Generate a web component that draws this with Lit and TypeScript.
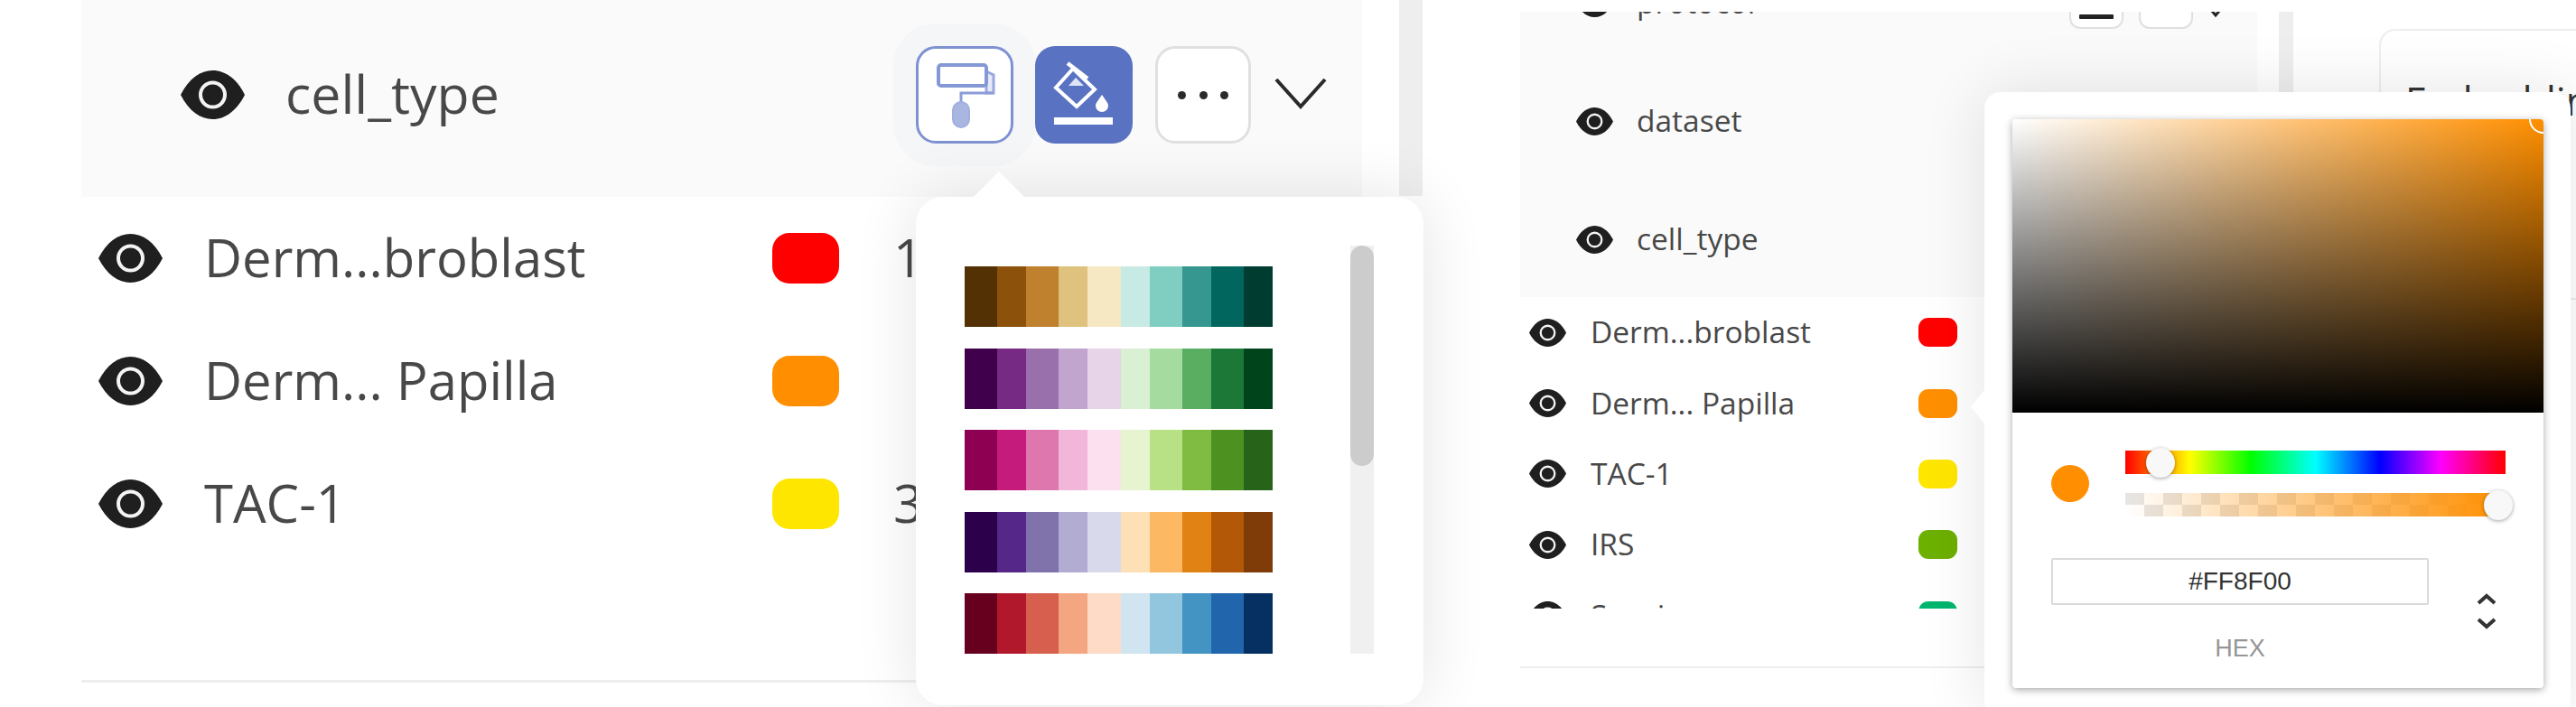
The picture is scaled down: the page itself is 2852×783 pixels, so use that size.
import { LitElement, html, css, svg } from "lit";
import { customElement } from "lit/decorators.js";

const PALETTES = [
  ["#543005", "#8c510a", "#bf812d", "#dfc27d", "#f6e8c3", "#c7eae5", "#80cdc1", "#35978f", "#01665e", "#003c30"],
  ["#40004b", "#762a83", "#9970ab", "#c2a5cf", "#e7d4e8", "#d9f0d3", "#a6dba0", "#5aae61", "#1b7837", "#00441b"],
  ["#8e0152", "#c51b7d", "#de77ae", "#f1b6da", "#fde0ef", "#e6f5d0", "#b8e186", "#7fbc41", "#4d9221", "#276419"],
  ["#2d004b", "#542788", "#8073ac", "#b2abd2", "#d8daeb", "#fee0b6", "#fdb863", "#e08214", "#b35806", "#7f3b08"],
  ["#67001f", "#b2182b", "#d6604d", "#f4a582", "#fddbc7", "#d1e5f0", "#92c5de", "#4393c3", "#2166ac", "#053061"],
];

const LEFT_ROWS = [
  { name: "Derm...broblast", color: "#ff0000", count: "1" },
  { name: "Derm... Papilla", color: "#ff8f00", count: "" },
  { name: "TAC-1", color: "#ffe600", count: "3" },
];
const RIGHT_ROWS = [
  { name: "Derm...broblast", color: "#ff0000" },
  { name: "Derm... Papilla", color: "#ff8f00" },
  { name: "TAC-1", color: "#ffe600" },
  { name: "IRS", color: "#6cb000" },
  { name: "Sensi", color: "#00b56e" },
];

const eye = svg`<svg class="eye" viewBox="0 0 71 54" preserveAspectRatio="none">
  <path fill="#1f1f1f" d="M0 27C9 9 22 0 35.5 0S62 9 71 27C62 45 49 54 35.5 54S9 45 0 27Z"/>
  <circle cx="35.5" cy="27" r="13.5" fill="#1f1f1f" stroke="#f4f4f4" stroke-width="4"/>
</svg>`;

const roller = svg`<svg class="ico" viewBox="0 0 108 108">
  <path fill="#e6eaf7" stroke="#98a8de" stroke-width="3" d="M78 28l8 4v20H78z"/>
  <rect x="25" y="21" width="53" height="23" rx="3" fill="#fff" stroke="#8498d6" stroke-width="4"/>
  <path fill="none" stroke="#8c9dd8" stroke-width="3" d="M86 52H50v11"/>
  <rect x="41" y="62" width="18" height="28" rx="9" fill="#a9b6e0" stroke="#a0afe0" stroke-width="2"/>
</svg>`;

const bucket = svg`<svg class="ico" viewBox="0 0 108 108">
  <path fill="none" stroke="#fff" stroke-width="4" d="M23 46 42 25 66 48 46 67Z"/>
  <path fill="none" stroke="#fff" stroke-width="4.5" d="M36 19 58 36"/>
  <path fill="#dfe4f4" d="M37 44 45 35 54 44Z"/>
  <path fill="#fff" d="M74 54C78 60 81 63 81 66A7 7 0 0 1 67 66C67 63 70 60 74 54Z"/>
  <rect x="21" y="79" width="65" height="8" fill="#fff"/>
</svg>`;

const chevron = svg`<svg class="chev" viewBox="0 0 58 38">
  <path fill="none" stroke="#2a2a2a" stroke-width="4" d="M2 3 29 33 56 3"/>
</svg>`;

const toggle = svg`<svg class="toggle" viewBox="0 0 22 40">
  <path fill="none" stroke="#333" stroke-width="4" d="M2 11 11 3 20 11M2 29 11 37 20 29"/>
</svg>`;

@customElement("app-root")
export class AppRoot extends LitElement {
  static styles = css`
    :host {
      display: block;
      width: 2852px;
      height: 783px;
      overflow: hidden;
      background: #fff;
      position: relative;
      font-family: "Open Sans", "Liberation Sans", sans-serif;
      color: #484848;
    }
    .stage { display: flex; width: 2852px; height: 783px; overflow: hidden; }
    .eye { display: block; flex: none; }

    /* left shot */
    .left { flex: none; width: 1600px; height: 783px; position: relative; display: flex; padding-left: 90px; box-sizing: border-box; }
    .l-list { width: 1418px; flex: none; }
    .l-head { height: 218px; background: #fafafa; display: flex; align-items: center; padding: 0 39px 8px 110px; box-sizing: border-box; }
    .l-head .eye { width: 71px; height: 54px; }
    .l-head .label { margin: 0 0 4px 45px; font-size: 59px; }
    .tools { margin-left: auto; display: flex; align-items: center; }
    .btn { width: 108px; height: 108px; box-sizing: border-box; border-radius: 22px; background: #fff; display: flex; align-items: center; justify-content: center; flex: none; }
    .btn-ring { border: 3px solid #7e92d2; box-shadow: 0 0 0 25px #f5f6f8; }
    .btn-solid { background: #5a72c2; margin-left: 24px; }
    .btn-plain { border: 3px solid #e0e0e0; margin-left: 25px; width: 106px; gap: 14.5px; }
    .dot3 { width: 9px; height: 9px; border-radius: 50%; background: #2b2b2b; }
    .ico { width: 108px; height: 108px; flex: none; margin: -3px; }
    .btn-solid .ico { margin: 0; }
    .chev { width: 58px; height: 38px; margin-left: 26px; margin-top: -2px; display: block; }
    .l-rows { height: 535px; border-bottom: 3px solid #eee; box-sizing: content-box; }
    .l-row { height: 136px; display: flex; align-items: center; padding-left: 19px; }
    .l-row .eye { width: 71px; height: 54px; }
    .l-row .label { margin: 0 0 3px 46px; font-size: 58px; width: 629px; white-space: nowrap; flex: none; }
    .l-swatch { width: 74px; height: 56px; border-radius: 19px; flex: none; }
    .l-count { margin: 0 0 3px 60px; font-size: 58px; }
    .l-track { margin-left: 41px; width: 26px; height: 217px; background: #eee; flex: none; }
    .pop { position: absolute; background: #fff; box-shadow: 0 0 70px rgba(0, 0, 0, 0.11); }
    .l-pop { left: 1014px; top: 218px; width: 562px; height: 563px; border-radius: 30px; display: flex; padding: 54px 0 0 54px; box-sizing: border-box; }
    .l-arrow { position: absolute; left: 64px; top: -28px; width: 56px; height: 28px; background: #fff; clip-path: polygon(50% 0, 100% 100%, 0 100%); }
    .pals { width: 341px; padding-top: 23px; display: flex; flex-direction: column; gap: 23.5px; flex: none; }
    .pal { height: 67px; display: flex; }
    .pal i { display: block; }
    .pal i:nth-child(odd) { flex: 36 0 0; }
    .pal i:nth-child(even) { flex: 32 0 0; }
    .p-track { margin-left: 86px; width: 26px; height: 452px; background: #f0f0f0; flex: none; }
    .p-thumb { height: 244px; background: #ccc; border-radius: 13px; }

    /* right shot */
    .right { flex: none; width: 1252px; height: 783px; display: flex; padding: 13px 0 0 83px; box-sizing: border-box; position: relative; }
    .r-list { width: 816px; flex: none; }
    .r-head { height: 316px; background: #fafafa; overflow: hidden; }
    .r-head-in { margin-top: -75px; }
    .r-hrow { height: 131px; display: flex; align-items: center; padding-left: 62px; padding-right: 30px; }
    .r-hrow .eye, .r-row .eye { width: 41px; height: 31px; }
    .r-hrow .label { margin: 0 0 3px 26px; font-size: 33.5px; }
    .r-tools { margin-left: auto; display: flex; align-items: center; gap: 17px; padding-bottom: 6px; }
    .r-btn { width: 60px; height: 62px; box-sizing: border-box; border-radius: 12px; border: 2px solid #e0e0e0; background: #fff; display: flex; align-items: flex-end; justify-content: center; }
    .r-bar { width: 38px; height: 5px; background: #222; border-radius: 1px; margin-bottom: 9px; }
    .r-chev { width: 32px; height: 22px; display: block; margin-left: -8px; margin-top: 16px; }
    .r-rows-wrap { height: 409px; border-bottom: 2px solid #eee; box-sizing: content-box; }
    .r-rows { height: 345px; overflow: hidden; }
    .r-row { height: 78.4px; display: flex; align-items: center; padding-left: 10px; }
    .r-row .label { margin: 0 0 2px 27px; font-size: 33.5px; width: 363px; white-space: nowrap; flex: none; }
    .r-swatch { width: 43px; height: 32px; border-radius: 11px; flex: none; }
    .r-track { margin-left: 24px; width: 16px; height: 200px; background: #eee; flex: none; }
    .r-card { margin-left: 95px; flex: 1 0 0; margin-top: 19px; height: 300px; border: 2px solid #eee; border-right: none; border-radius: 18px 0 0 0; padding: 43px 0 0 27px; font-size: 43px; white-space: nowrap; overflow: hidden; color: #333; box-sizing: border-box; line-height: 70px; }
    .r-pop { left: 597px; top: 102px; width: 649px; height: 693px; border-radius: 18px; padding: 30px 30px 0 31px; box-sizing: border-box; }
    .r-arrow { position: absolute; left: -15px; top: 330px; width: 15px; height: 37px; background: #fff; clip-path: polygon(0 50%, 100% 0, 100% 100%); }
    .picker { width: 588px; height: 630px; background: #fff; border-radius: 4px; box-shadow: 0 2px 8px rgba(0, 0, 0, 0.35); overflow: hidden; }
    .sat { height: 325px; position: relative; overflow: hidden; background: linear-gradient(to top, #000, transparent), linear-gradient(to right, #fff, #ff8f00); }
    .sat-dot { position: absolute; right: -16px; top: -16px; width: 32px; height: 32px; box-sizing: border-box; border: 2.5px solid #fff; border-radius: 50%; }
    .pbody { padding: 42px 0 0 43px; }
    .sl-row { display: flex; align-items: center; }
    .cdot { width: 42px; height: 41px; border-radius: 50%; background: #ff8f00; flex: none; }
    .sliders { margin-left: 40px; width: 421px; display: flex; flex-direction: column; gap: 21px; }
    .bar { height: 26px; position: relative; }
    .hue { background: linear-gradient(to right, #f00 0, #ff0 17%, #0f0 33%, #0ff 50%, #00f 67%, #f0f 83%, #f00 100%); }
    .alpha { background: linear-gradient(to right, rgba(255, 143, 0, 0), #ff8f00), repeating-conic-gradient(#fff 0 25%, #e6e6e6 0 50%) 0 0 / 42px 26px; }
    .handle { position: absolute; width: 32px; height: 33px; top: -3px; border-radius: 50%; background: #f8f8f8; box-shadow: 0 1px 4px rgba(0, 0, 0, 0.37); }
    .hue .handle { left: 23px; }
    .alpha .handle { left: 397px; }
    .fields { display: flex; margin-top: 46px; }
    .field { width: 418px; flex: none; text-align: center; font-family: "Liberation Sans", Arial, sans-serif; }
    .input { height: 52px; box-sizing: border-box; border-radius: 2px; box-shadow: inset 0 0 0 2px #dadada; display: flex; align-items: center; justify-content: center; font-size: 28px; color: #333; }
    .hex { margin-top: 32px; font-size: 27px; color: #969696; line-height: 32px; }
    .toggle { display: block; width: 22px; height: 40px; margin: 39px 0 0 53px; }
  `;

  render() {
    return html`<div class="stage">
      <div class="left">
        <div class="l-list">
          <div class="l-head">
            ${eye}<span class="label">cell_type</span>
            <div class="tools">
              <div class="btn btn-ring">${roller}</div>
              <div class="btn btn-solid">${bucket}</div>
              <div class="btn btn-plain"><i class="dot3"></i><i class="dot3"></i><i class="dot3"></i></div>
              ${chevron}
            </div>
          </div>
          <div class="l-rows">
            ${LEFT_ROWS.map(
              (r) => html`<div class="l-row">
                ${eye}<span class="label">${r.name}</span>
                <span class="l-swatch" style="background:${r.color}"></span>
                <span class="l-count">${r.count}</span>
              </div>`
            )}
          </div>
        </div>
        <div class="l-track"></div>
        <div class="pop l-pop">
          <div class="l-arrow"></div>
          <div class="pals">
            ${PALETTES.map(
              (p) => html`<div class="pal">${p.map((c) => html`<i style="background:${c}"></i>`)}</div>`
            )}
          </div>
          <div class="p-track"><div class="p-thumb"></div></div>
        </div>
      </div>

      <div class="right">
        <div class="r-list">
          <div class="r-head">
            <div class="r-head-in">
              <div class="r-hrow">
                ${eye}<span class="label">protocol</span>
                <div class="r-tools">
                  <div class="r-btn"><div class="r-bar"></div></div>
                  <div class="r-btn"></div>
                  ${svg`<svg class="r-chev" viewBox="0 0 32 22"><path fill="none" stroke="#222" stroke-width="3" d="M2 2 16 19 30 2"/></svg>`}
                </div>
              </div>
              <div class="r-hrow">${eye}<span class="label">dataset</span></div>
              <div class="r-hrow">${eye}<span class="label">cell_type</span></div>
            </div>
          </div>
          <div class="r-rows-wrap">
            <div class="r-rows">
              ${RIGHT_ROWS.map(
                (r) => html`<div class="r-row">
                  ${eye}<span class="label">${r.name}</span>
                  <span class="r-swatch" style="background:${r.color}"></span>
                </div>`
              )}
            </div>
          </div>
        </div>
        <div class="r-track"></div>
        <div class="r-card">Embedding</div>
        <div class="pop r-pop">
          <div class="r-arrow"></div>
          <div class="picker">
            <div class="sat"><div class="sat-dot"></div></div>
            <div class="pbody">
              <div class="sl-row">
                <div class="cdot"></div>
                <div class="sliders">
                  <div class="bar hue"><div class="handle"></div></div>
                  <div class="bar alpha"><div class="handle"></div></div>
                </div>
              </div>
              <div class="fields">
                <div class="field">
                  <div class="input">#FF8F00</div>
                  <div class="hex">HEX</div>
                </div>
                ${toggle}
              </div>
            </div>
          </div>
        </div>
      </div>
    </div>`;
  }
}
